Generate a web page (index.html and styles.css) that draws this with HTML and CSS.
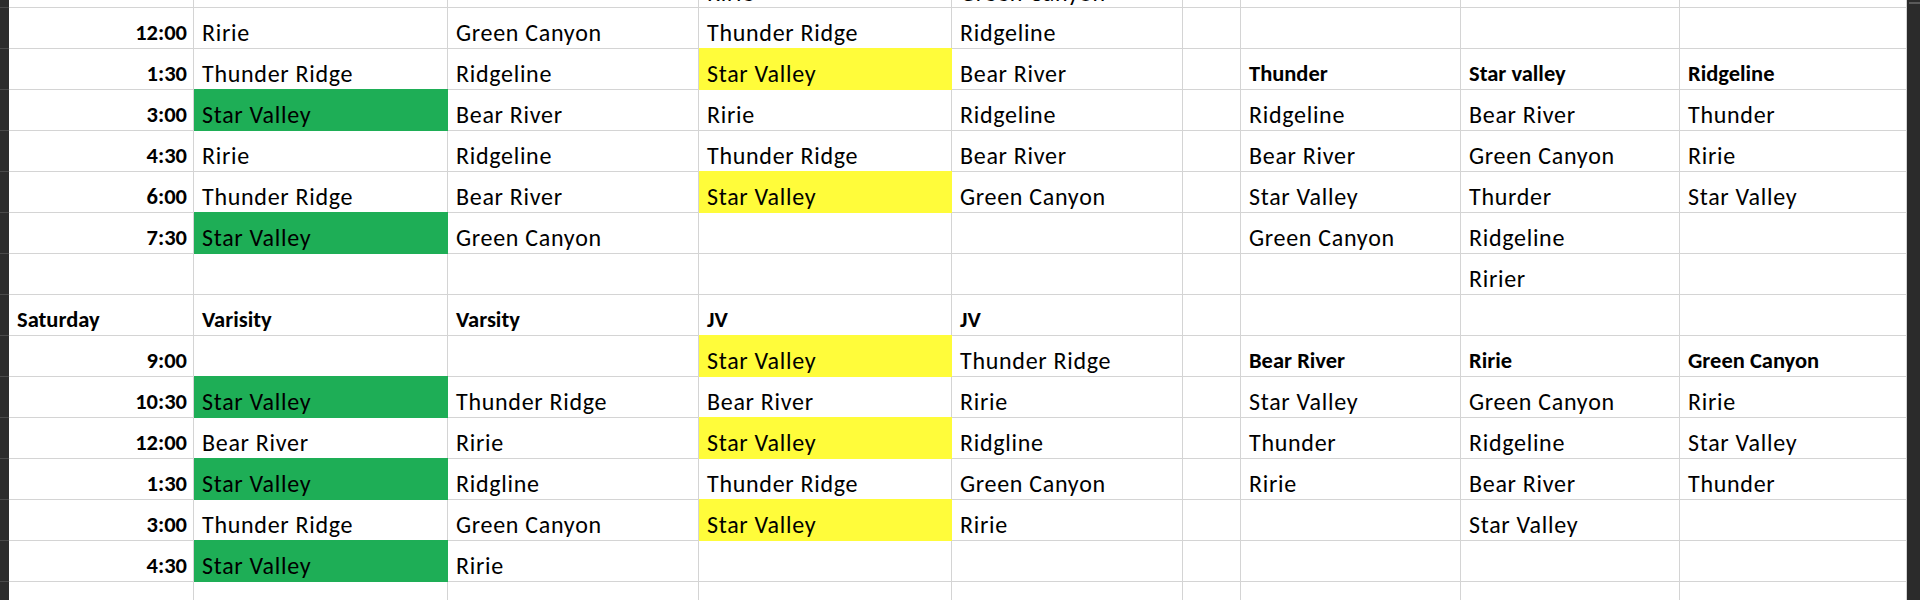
FILE: index.html
```html
<!DOCTYPE html>
<html>
<head>
<meta charset="utf-8">
<link rel="stylesheet" href="styles.css">
</head>
<body>
<div class="screen">
  <div class="sheet">
    <div class="rh"></div><div class="c t r0">10:30</div><div class="c r0"></div><div class="c r0"></div><div class="c r0">Ririe</div><div class="c r0">Green Canyon</div><div class="c"></div><div class="c"></div><div class="c"></div><div class="c"></div>

    <div class="rh"></div><div class="c t">12:00</div><div class="c">Ririe</div><div class="c">Green Canyon</div><div class="c">Thunder Ridge</div><div class="c">Ridgeline</div><div class="c"></div><div class="c"></div><div class="c"></div><div class="c"></div>

    <div class="rh"></div><div class="c t">1:30</div><div class="c">Thunder Ridge</div><div class="c">Ridgeline</div><div class="c y">Star Valley</div><div class="c">Bear River</div><div class="c"></div><div class="c b">Thunder</div><div class="c b">Star valley</div><div class="c b">Ridgeline</div>

    <div class="rh"></div><div class="c t">3:00</div><div class="c g">Star Valley</div><div class="c">Bear River</div><div class="c">Ririe</div><div class="c">Ridgeline</div><div class="c"></div><div class="c">Ridgeline</div><div class="c">Bear River</div><div class="c">Thunder</div>

    <div class="rh"></div><div class="c t">4:30</div><div class="c">Ririe</div><div class="c">Ridgeline</div><div class="c">Thunder Ridge</div><div class="c">Bear River</div><div class="c"></div><div class="c">Bear River</div><div class="c">Green Canyon</div><div class="c">Ririe</div>

    <div class="rh"></div><div class="c t">6:00</div><div class="c">Thunder Ridge</div><div class="c">Bear River</div><div class="c y">Star Valley</div><div class="c">Green Canyon</div><div class="c"></div><div class="c">Star Valley</div><div class="c">Thurder</div><div class="c">Star Valley</div>

    <div class="rh"></div><div class="c t">7:30</div><div class="c g">Star Valley</div><div class="c">Green Canyon</div><div class="c"></div><div class="c"></div><div class="c"></div><div class="c">Green Canyon</div><div class="c">Ridgeline</div><div class="c"></div>

    <div class="rh"></div><div class="c"></div><div class="c"></div><div class="c"></div><div class="c"></div><div class="c"></div><div class="c"></div><div class="c"></div><div class="c">Ririer</div><div class="c"></div>

    <div class="rh"></div><div class="c b">Saturday</div><div class="c b">Varisity</div><div class="c b">Varsity</div><div class="c b">JV</div><div class="c b">JV</div><div class="c"></div><div class="c"></div><div class="c"></div><div class="c"></div>

    <div class="rh"></div><div class="c t">9:00</div><div class="c"></div><div class="c"></div><div class="c y">Star Valley</div><div class="c">Thunder Ridge</div><div class="c"></div><div class="c b">Bear River</div><div class="c b">Ririe</div><div class="c b">Green Canyon</div>

    <div class="rh"></div><div class="c t">10:30</div><div class="c g">Star Valley</div><div class="c">Thunder Ridge</div><div class="c">Bear River</div><div class="c">Ririe</div><div class="c"></div><div class="c">Star Valley</div><div class="c">Green Canyon</div><div class="c">Ririe</div>

    <div class="rh"></div><div class="c t">12:00</div><div class="c">Bear River</div><div class="c">Ririe</div><div class="c y">Star Valley</div><div class="c">Ridgline</div><div class="c"></div><div class="c">Thunder</div><div class="c">Ridgeline</div><div class="c">Star Valley</div>

    <div class="rh"></div><div class="c t">1:30</div><div class="c g">Star Valley</div><div class="c">Ridgline</div><div class="c">Thunder Ridge</div><div class="c">Green Canyon</div><div class="c"></div><div class="c">Ririe</div><div class="c">Bear River</div><div class="c">Thunder</div>

    <div class="rh"></div><div class="c t">3:00</div><div class="c">Thunder Ridge</div><div class="c">Green Canyon</div><div class="c y">Star Valley</div><div class="c">Ririe</div><div class="c"></div><div class="c"></div><div class="c">Star Valley</div><div class="c"></div>

    <div class="rh"></div><div class="c t">4:30</div><div class="c g">Star Valley</div><div class="c">Ririe</div><div class="c"></div><div class="c"></div><div class="c"></div><div class="c"></div><div class="c"></div><div class="c"></div>

    <div class="rh"></div><div class="c"></div><div class="c"></div><div class="c"></div><div class="c"></div><div class="c"></div><div class="c"></div><div class="c"></div><div class="c"></div><div class="c"></div>
  </div>
  <div class="scroll"><div class="thumb"></div></div>
</div>
</body>
</html>
```

FILE: styles.css
```css
html, body {
  margin: 0;
  padding: 0;
  background: #ffffff;
  overflow: hidden;
}

.screen {
  display: flex;
  width: 1920px;
  height: 600px;
  overflow: hidden;
}

.sheet {
  display: grid;
  grid-template-columns: 9px 185px 254px 251px 253px 231px 58px 220px 219px 227px;
  grid-auto-rows: 41px;
  margin-top: -33px;
  flex: none;
  font-family: Carlito, Lato, "Liberation Sans", sans-serif;
  font-size: 24px;
  color: #000000;
}

.rh {
  background: #2c2c2c;
  border-bottom: 1px solid #4a4a4a;
}

.c {
  box-sizing: border-box;
  border-right: 1px solid #d4d4d4;
  border-bottom: 1px solid #d4d4d4;
  padding: 10px 8px 0 8px;
  line-height: 30px;
  letter-spacing: 0.7px;
  white-space: nowrap;
  overflow: hidden;
}

.r0 {
  padding-top: 11px;
}

.t {
  text-align: right;
  font-weight: 700;
  font-size: 22.5px;
  letter-spacing: 0;
  padding-right: 6px;
}

.b {
  font-weight: 700;
  font-size: 22.5px;
  letter-spacing: 0;
}

.g {
  background: #1eae56;
  border-right-color: #1eae56;
  border-bottom-color: #1eae56;
  box-shadow: 0 -1px 0 #1eae56;
}

.y {
  background: #fffc3a;
  border-right-color: #fffc3a;
  border-bottom-color: #fffc3a;
  box-shadow: 0 -1px 0 #fffc3a;
}

.scroll {
  flex: 1;
  background: #2b2b2b;
  position: relative;
}

.thumb {
  position: absolute;
  left: 2px;
  right: 0;
  top: 2px;
  height: 2px;
  background: #5a5a5a;
}
```
